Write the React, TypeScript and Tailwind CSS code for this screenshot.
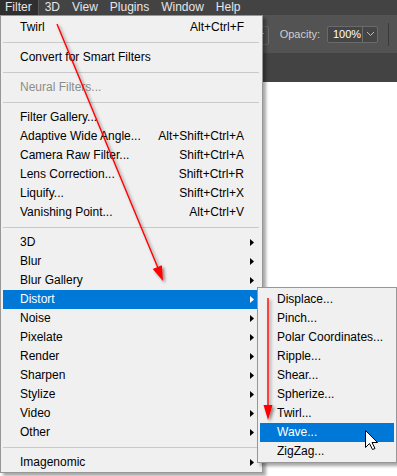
import React from "react";

type Entry =
  | { sep: true }
  | { label: string; shortcut?: string; sub?: boolean; disabled?: boolean; active?: boolean };

const filterMenu: Entry[] = [
  { label: "Twirl", shortcut: "Alt+Ctrl+F" },
  { sep: true },
  { label: "Convert for Smart Filters" },
  { sep: true },
  { label: "Neural Filters...", disabled: true },
  { sep: true },
  { label: "Filter Gallery..." },
  { label: "Adaptive Wide Angle...", shortcut: "Alt+Shift+Ctrl+A" },
  { label: "Camera Raw Filter...", shortcut: "Shift+Ctrl+A" },
  { label: "Lens Correction...", shortcut: "Shift+Ctrl+R" },
  { label: "Liquify...", shortcut: "Shift+Ctrl+X" },
  { label: "Vanishing Point...", shortcut: "Alt+Ctrl+V" },
  { sep: true },
  { label: "3D", sub: true },
  { label: "Blur", sub: true },
  { label: "Blur Gallery", sub: true },
  { label: "Distort", sub: true, active: true },
  { label: "Noise", sub: true },
  { label: "Pixelate", sub: true },
  { label: "Render", sub: true },
  { label: "Sharpen", sub: true },
  { label: "Stylize", sub: true },
  { label: "Video", sub: true },
  { label: "Other", sub: true },
  { sep: true },
  { label: "Imagenomic", sub: true },
];

const distortMenu = [
  "Displace...",
  "Pinch...",
  "Polar Coordinates...",
  "Ripple...",
  "Shear...",
  "Spherize...",
  "Twirl...",
  "Wave...",
  "ZigZag...",
];

function SubArrow() {
  return (
    <svg width="4" height="7" viewBox="0 0 4 7" className="block">
      <polygon points="0,0 4,3.5 0,7" fill="currentColor" />
    </svg>
  );
}

function DistortSubmenu() {
  return (
    <div className="absolute left-full top-[-3px] w-[140px] bg-[#f0f0f0] border border-[#979797] pt-[2px] pb-[1px] px-[2px] shadow-[3px_3px_3px_rgba(0,0,0,0.35)] z-10">
      {distortMenu.map((label) => {
        const active = label === "Wave...";
        return (
          <div
            key={label}
            className={`h-[19px] leading-[19px] pl-[17px] whitespace-nowrap ${
              active ? "bg-[#0078d7] text-white" : "text-black"
            }`}
          >
            {label}
          </div>
        );
      })}
    </div>
  );
}

function FilterMenu() {
  return (
    <div className="absolute left-0 top-[15px] w-[263px] bg-[#f0f0f0] border border-[#979797] pt-[2px] pb-0 pl-[2px] pr-[5px] shadow-[3px_3px_3px_rgba(0,0,0,0.35)] text-[12px]">
      {filterMenu.map((item, i) => {
        if ("sep" in item) {
          return (
            <div key={i} className="h-[11px] pt-[5px]">
              <div className="h-px bg-[#c9c9c9] mr-[-2px]" />
            </div>
          );
        }
        return (
          <div
            key={i}
            className={`relative flex items-center h-[19px] pl-[17px] pr-[3px] whitespace-nowrap ${
              item.active
                ? "bg-[#0078d7] text-white"
                : item.disabled
                ? "text-[#8c8c8c]"
                : "text-black"
            }`}
          >
            <span className="flex-1 leading-[19px]">{item.label}</span>
            {item.shortcut && <span className="mr-[6px] leading-[19px]">{item.shortcut}</span>}
            <span className="w-[4px] flex items-center">{item.sub && <SubArrow />}</span>
            {item.active && <DistortSubmenu />}
          </div>
        );
      })}
    </div>
  );
}

function Overlay() {
  return (
    <svg
      width="397"
      height="476"
      viewBox="0 0 397 476"
      className="absolute inset-0 pointer-events-none z-20"
    >
      <defs>
        <filter id="shade" x="-20%" y="-20%" width="140%" height="140%">
          <feDropShadow dx="2" dy="2" stdDeviation="1.6" floodColor="#000" floodOpacity="0.45" />
        </filter>
      </defs>
      <g filter="url(#shade)">
        <line x1="57" y1="24" x2="158" y2="268" stroke="#ff0000" strokeWidth="1.4" />
        <polygon points="163,281 152.7,269 161.9,265.2" fill="#ff0000" />
        <line x1="268" y1="298" x2="268" y2="407" stroke="#ff0000" strokeWidth="1.4" />
        <polygon points="268,420 263.5,405 272.5,405" fill="#ff0000" />
      </g>
      <path
        d="M365.5 430.5 L365.5 447.5 L369.5 443.5 L372.5 449.5 L375 448.5 L372 442.5 L377.5 442.5 Z"
        fill="#fff"
        stroke="#000"
        strokeWidth="1"
        strokeLinejoin="miter"
      />
    </svg>
  );
}

export default function App() {
  const menus = ["Filter", "3D", "View", "Plugins", "Window", "Help"];

  return (
    <div className="relative w-[397px] h-[476px] overflow-hidden bg-white font-['Liberation_Sans',Arial,sans-serif]">
      {/* App chrome behind the menu */}
      <div className="flex h-[15px] bg-[#434343] text-[12px] text-[#e6e6e6] ml-[-1px]">
        {menus.map((m) => (
          <div
            key={m}
            className={`px-[6px] leading-[15px] ${
              m === "Filter" ? "bg-[#2f2f2f] border-r border-[#5a5a5a]" : ""
            }`}
          >
            {m}
          </div>
        ))}
      </div>

      <div className="flex items-center justify-end h-[38px] bg-[#535353] pr-[8px] text-[11px]">
        <div className="flex items-center justify-end w-[80px] h-[19px] mt-[2px] border border-[#6b6b6b] rounded-[2px] pr-[4px]">
          <svg width="7" height="4" viewBox="0 0 7 4">
            <polyline points="0,0 3.5,3.5 7,0" fill="none" stroke="#bdbdbd" strokeWidth="1" />
          </svg>
        </div>
        <span className="ml-[11px] text-[#cfcfcf]">Opacity:</span>
        <div className="flex items-center ml-[7px] w-[51px] h-[17px] border border-[#6b6b6b] rounded-[2px] bg-[#454545]">
          <span className="flex-1 pl-[5px] text-white leading-[15px]">100%</span>
          <div className="flex items-center justify-center w-[15px] h-full border-l border-[#6b6b6b]">
            <svg width="7" height="4" viewBox="0 0 7 4">
              <polyline points="0,0 3.5,3.5 7,0" fill="none" stroke="#bdbdbd" strokeWidth="1" />
            </svg>
          </div>
        </div>
        <div className="ml-[10px] w-px h-[23px] bg-[#3a3a3a]" />
      </div>

      <div className="h-[29px] bg-[#434343]" />
      <div className="h-[394px] bg-white" />

      <FilterMenu />
      <Overlay />
    </div>
  );
}
